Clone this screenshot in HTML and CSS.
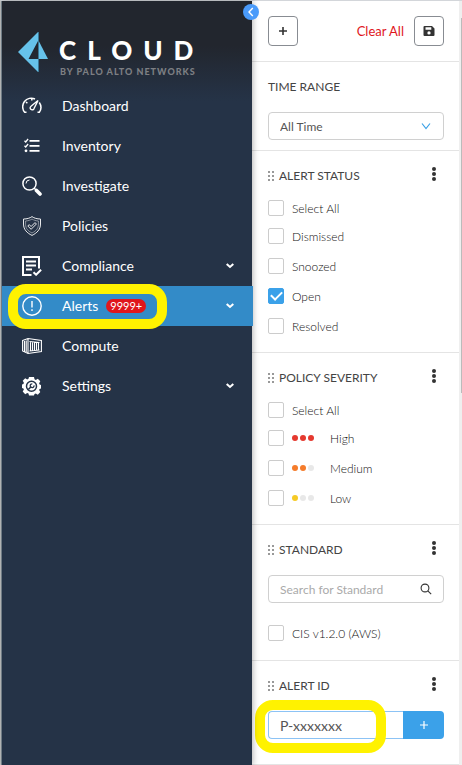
FILE: index.html
```html
<!DOCTYPE html>
<html lang="en">
<head>
<meta charset="utf-8">
<meta name="viewport" content="width=device-width, initial-scale=1">
<title>Cloud – Alerts</title>
<link rel="stylesheet" href="styles.css">
</head>
<body>
<div class="app">
  <aside class="sidebar">
    <button class="collapse" type="button" aria-label="Collapse menu">
      <svg width="16" height="16" viewBox="0 0 16 16" fill="none" stroke="#fff" stroke-width="1.400"><path d="M9.800 4 6 8l3.800 4"/></svg>
    </button>
    <header class="brand">
      <svg class="brand-mark" width="32" height="40" viewBox="0 0 32 40">
        <path fill="#66c2ea" d="M20 0 0 20l20 20V27H10.500L20 9z"/>
        <path fill="#66c2ea" d="M20.500 8.500 30 27h-9.500z"/>
        <path stroke="#3b7896" d="M20.500 0v40"/>
      </svg>
      <div class="brand-text">
        <span class="brand-name">CLOUD</span>
        <span class="brand-by">BY PALO ALTO NETWORKS</span>
      </div>
    </header>
    <nav class="nav">
      <a class="nav-item" href="#dashboard">
        <svg class="icon" viewBox="0 0 20 20" fill="none" stroke="#fff" stroke-width="1.500"><path d="M4.500 16.300H2.700A8.600 8.600 0 0 1 13 3M17.300 6.500a8.600 8.600 0 0 1 0 9.800h-1.800M9.800 2.500v2M4 6l1.400 1.200"/><path d="M16 4.500 9 10.200a2 2 0 1 0 2.900 2.600z" stroke-width="1.400"/></svg>
        <span>Dashboard</span>
      </a>
      <a class="nav-item" href="#inventory">
        <svg class="icon" viewBox="0 0 20 20" fill="none" stroke="#fff"><path stroke-width="1.800" d="M7.500 4.800h10M7.500 9.800h10M7.500 14.800h10"/><path stroke-width="1.300" d="m2.500 4.800 1.200 1.200 2.400-3M2.500 9.800 3.700 11l2.400-3"/><circle cx="4" cy="14.800" r="1.400" fill="#fff" stroke="none"/></svg>
        <span>Inventory</span>
      </a>
      <a class="nav-item" href="#investigate">
        <svg class="icon" viewBox="0 0 20 20" fill="none" stroke="#fff"><circle cx="7.500" cy="7.500" r="6.600" stroke-width="1.500"/><path d="M4 7.500A3.600 3.600 0 0 1 7.500 4" stroke-width="1"/><path d="m12 12 2 2" stroke-width="1.500"/><path d="m14.500 14.500 3.500 3.500" stroke-width="3.600" stroke-linecap="round"/></svg>
        <span>Investigate</span>
      </a>
      <a class="nav-item" href="#policies">
        <svg class="icon" viewBox="0 0 20 20" fill="none" stroke="#fff" stroke-width=".9"><path d="M10 .6c2.200 1.600 5 2.400 8.500 2.400v5c0 5.500-3.500 9-8.500 11.400C5 17 1.500 13.500 1.500 8V3C5 3 7.800 2.200 10 .6z"/><path d="M10 3c1.800 1.200 4 1.800 6.400 2v3.500c0 4-2.600 6.600-6.400 8.500-3.800-1.900-6.400-4.500-6.400-8.500V5C6 4.800 8.200 4.200 10 3z" stroke-opacity=".5"/><path d="m5.800 10 1.400-1.400 1.900 1.900L13 6.600 14.400 8l-5.300 5.300z"/></svg>
        <span>Policies</span>
      </a>
      <a class="nav-item" href="#compliance">
        <svg class="icon" viewBox="0 0 20 20" fill="none" stroke="#fff"><path stroke-width="2" d="M9.500 19H1V1h16v11.500"/><path stroke-width="1.800" d="M4 5.500h10M4 9.500h10M4 13.500h6"/><path stroke-width="2" d="m11.500 16.200 2.600 2.500 5-5"/></svg>
        <span>Compliance</span>
        <svg class="caret" viewBox="0 0 8 6" fill="none" stroke="#fff" stroke-width="2"><path d="m.7 1 3.300 3L7.300 1"/></svg>
      </a>
      <a class="nav-item nav-item-active" href="#alerts" aria-current="page">
        <svg class="icon" viewBox="0 0 20 20" fill="none" stroke="#fff"><circle cx="10" cy="10" r="9.200" stroke-width="1.400"/><path stroke-width="1.400" d="M10 5v6.500M10 13.200v1.800"/></svg>
        <span>Alerts</span>
        <span class="badge">9999+</span>
        <svg class="caret" viewBox="0 0 8 6" fill="none" stroke="#fff" stroke-width="2"><path d="m.7 1 3.300 3L7.300 1"/></svg>
        <i class="marker marker-alerts"></i>
      </a>
      <a class="nav-item" href="#compute">
        <svg class="icon" viewBox="0 0 20 20" fill="none" stroke="#fff"><path stroke-width="1.100" d="M.6 4.500 6 2.500l13.400 2v11L6 17.500.6 15zM6 2.500v15M2.500 5v10.500M4.200 4.500v11.500M8.500 6v8.500M10.500 6v8.500M12.500 6.200v8M14.500 6.400v7.800M16.500 6.600v7.400M7.500 5.500l10 1M7.500 15l10-1"/></svg>
        <span>Compute</span>
      </a>
      <a class="nav-item" href="#settings">
        <svg class="icon" viewBox="0 0 20 20"><path fill="#fff" d="M7 1h5l.5 2.300 1.300.6 2-1.200 2.500 2.600-1.200 2 .5 1.200 1.400.5v3.400l-1.400.5-.5 1.200 1.200 2-2.500 2.600-2-1.200-1.300.6L12 19.500H7l-.5-1.900-1.300-.6-2 1.200L.7 15.600l1.200-2-.5-1.200L0 11.900V8.500L1.400 8l.5-1.200-1.200-2 2.500-2.600 2 1.200 1.300-.6z"/><circle cx="9.500" cy="10.300" r="5" fill="none" stroke="#253347" stroke-width="1.500"/><path d="m6.300 13.500 3-3" stroke="#253347" stroke-width="1.600"/><path d="M12 9.300a1.900 1.900 0 1 1-1.700-1.500" fill="none" stroke="#253347" stroke-width="1.300"/></svg>
        <span>Settings</span>
        <svg class="caret" viewBox="0 0 8 6" fill="none" stroke="#fff" stroke-width="2"><path d="m.7 1 3.300 3L7.300 1"/></svg>
      </a>
    </nav>
  </aside>

  <main class="filters">
    <div class="toolbar">
      <button class="tool" type="button" aria-label="Add filter"><svg width="10" height="10" viewBox="0 0 10 10" stroke="#333" stroke-width="1.600"><path d="M5 1v8M1 5h8"/></svg></button>
      <button class="clear" type="button">Clear All</button>
      <button class="tool" type="button" aria-label="Save filter"><svg width="12" height="12" viewBox="0 0 12 12"><path fill="#333" fill-rule="evenodd" d="M1.500 1H9l2.500 2.500V10a1 1 0 0 1-1 1h-9a1 1 0 0 1-1-1V2a1 1 0 0 1 1-1zM2.500 2.300v2.500h5.800V2.300zM6 6.300a1.600 1.600 0 1 0 0 3.300 1.600 1.600 0 0 0 0-3.300z"/></svg></button>
    </div>

    <section class="group group-range">
      <label class="title" for="range">TIME RANGE</label>
      <div class="field">
        <select id="range"><option>All Time</option></select>
        <svg class="field-icon" width="10" height="8" viewBox="0 0 10 8" fill="none" stroke="#3aa0e6" stroke-width="1.200"><path d="m1 1.500 4 5 4-5"/></svg>
      </div>
    </section>

    <section class="group">
      <div class="title-row">
        <svg class="grip" width="6" height="10" viewBox="0 0 6 10"><path fill="#999" d="M0 0h2v2H0zM4 0h2v2H4zM0 4h2v2H0zM4 4h2v2H4zM0 8h2v2H0zM4 8h2v2H4z"/></svg>
        <h2 class="title">ALERT STATUS</h2>
        <button class="more" type="button" aria-label="Alert status options"><svg width="4" height="14" viewBox="0 0 4 14" fill="#333"><circle cx="2" cy="2" r="2"/><circle cx="2" cy="7" r="2"/><circle cx="2" cy="12" r="2"/></svg></button>
      </div>
      <div class="checks">
        <label class="check check-all"><input type="checkbox"><span>Select All</span></label>
        <label class="check"><input type="checkbox"><span>Dismissed</span></label>
        <label class="check"><input type="checkbox"><span>Snoozed</span></label>
        <label class="check"><input type="checkbox" checked><span>Open</span></label>
        <label class="check"><input type="checkbox"><span>Resolved</span></label>
      </div>
    </section>

    <section class="group">
      <div class="title-row">
        <svg class="grip" width="6" height="10" viewBox="0 0 6 10"><path fill="#999" d="M0 0h2v2H0zM4 0h2v2H4zM0 4h2v2H0zM4 4h2v2H4zM0 8h2v2H0zM4 8h2v2H4z"/></svg>
        <h2 class="title">POLICY SEVERITY</h2>
        <button class="more" type="button" aria-label="Policy severity options"><svg width="4" height="14" viewBox="0 0 4 14" fill="#333"><circle cx="2" cy="2" r="2"/><circle cx="2" cy="7" r="2"/><circle cx="2" cy="12" r="2"/></svg></button>
      </div>
      <div class="checks">
        <label class="check check-all"><input type="checkbox"><span>Select All</span></label>
        <label class="check"><input type="checkbox"><span class="dots dots-high"><i></i><i></i><i></i></span><span>High</span></label>
        <label class="check"><input type="checkbox"><span class="dots dots-medium"><i></i><i></i><i></i></span><span>Medium</span></label>
        <label class="check"><input type="checkbox"><span class="dots dots-low"><i></i><i></i><i></i></span><span>Low</span></label>
      </div>
    </section>

    <section class="group group-standard">
      <div class="title-row">
        <svg class="grip" width="6" height="10" viewBox="0 0 6 10"><path fill="#999" d="M0 0h2v2H0zM4 0h2v2H4zM0 4h2v2H0zM4 4h2v2H4zM0 8h2v2H0zM4 8h2v2H4z"/></svg>
        <h2 class="title">STANDARD</h2>
        <button class="more" type="button" aria-label="Standard options"><svg width="4" height="14" viewBox="0 0 4 14" fill="#333"><circle cx="2" cy="2" r="2"/><circle cx="2" cy="7" r="2"/><circle cx="2" cy="12" r="2"/></svg></button>
      </div>
      <div class="field">
        <input type="text" placeholder="Search for Standard" aria-label="Search for Standard">
        <svg class="field-icon" width="12" height="12" viewBox="0 0 12 12" fill="none" stroke="#333" stroke-width="1.100"><circle cx="5" cy="5" r="3.900"/><path d="m7.800 7.800 3.400 3.400"/></svg>
      </div>
      <label class="check check-single"><input type="checkbox"><span>CIS v1.2.0 (AWS)</span></label>
    </section>

    <section class="group group-id">
      <div class="title-row">
        <svg class="grip" width="6" height="10" viewBox="0 0 6 10"><path fill="#999" d="M0 0h2v2H0zM4 0h2v2H4zM0 4h2v2H0zM4 4h2v2H4zM0 8h2v2H0zM4 8h2v2H4z"/></svg>
        <h2 class="title">ALERT ID</h2>
        <button class="more" type="button" aria-label="Alert ID options"><svg width="4" height="14" viewBox="0 0 4 14" fill="#333"><circle cx="2" cy="2" r="2"/><circle cx="2" cy="7" r="2"/><circle cx="2" cy="12" r="2"/></svg></button>
      </div>
      <div class="id-row">
        <input class="id-input" type="text" value="P-xxxxxxx" aria-label="Alert ID">
        <button class="id-add" type="button" aria-label="Add alert ID"><svg width="8" height="8" viewBox="0 0 8 8" stroke="#fff" stroke-width="1.200"><path d="M4 0v8M0 4h8"/></svg></button>
        <i class="marker marker-id"></i>
      </div>
    </section>
  </main>
  <div class="scroll"><div class="scroll-thumb"></div></div>
</div>
</body>
</html>
```

FILE: styles.css
```css
* { box-sizing: border-box; }

body {
  margin: 0;
  font-family: Lato, "Liberation Sans", sans-serif;
  font-size: 12px;
  color: #333;
  background: #fff;
}

button { font: inherit; padding: 0; cursor: pointer; }
svg { display: block; flex: none; }

.app {
  display: flex;
  min-height: 100vh;
  border-top: 1px solid #d3d6da;
  border-left: 1px solid #c4c6c6;
}

/* Sidebar */
.sidebar {
  position: relative;
  z-index: 1;
  flex: 0 0 251px;
  border-left: 1px solid #6f7b84;
  background: linear-gradient(#22262e 0, #22262e 45px, #253347 100px);
  box-shadow: 1px 0 6px rgba(0, 0, 0, .3);
}

.collapse {
  position: absolute;
  top: 3px;
  right: -7px;
  width: 16px;
  height: 16px;
  border: 0;
  border-radius: 50%;
  background: #4a9bfa;
}

.brand {
  display: flex;
  gap: 9px;
  height: 85px;
  padding: 31px 16px 0;
}

.brand-text { display: flex; flex-direction: column; padding-top: 2px; }

.brand-name {
  font-size: 26px;
  line-height: 32px;
  font-weight: 900;
  letter-spacing: 11px;
  color: #fff;
}

.brand-by {
  margin-left: 1px;
  font-size: 9px;
  line-height: 11px;
  font-weight: 900;
  letter-spacing: 1px;
  white-space: nowrap;
  color: #7d7f83;
}

.nav-item {
  position: relative;
  display: flex;
  align-items: center;
  height: 40px;
  padding: 0 18px 0 20px;
  font-size: 14px;
  line-height: 16px;
  color: #fff;
  text-decoration: none;
}

.nav-item-active { margin-right: -1px; padding-right: 19px; background: #338bc8; }

.icon { width: 20px; height: 20px; margin-right: 20px; }
.caret { width: 8px; height: 6px; margin-left: auto; }

.badge {
  margin-left: 8px;
  padding: 0 4px;
  border-radius: 7px;
  font-size: 11px;
  line-height: 14px;
  background: #e0161c;
}

.marker {
  position: absolute;
  border: 10px solid #fff200;
  border-radius: 18px;
  pointer-events: none;
}

.marker-alerts { left: 6px; top: -2px; width: 159px; height: 45px; }
.marker-id { left: -13px; top: -11px; width: 131px; height: 53px; }

/* Filter panel */
.filters { flex: 1; min-width: 0; }

.toolbar {
  display: flex;
  align-items: center;
  height: 61px;
  padding: 0 15px 0 16px;
  border-bottom: 1px solid #e4e4e4;
}

.tool {
  display: grid;
  place-items: center;
  width: 30px;
  height: 30px;
  border: 1px solid #888c92;
  border-radius: 4px;
  background: #fff;
}

.clear {
  margin-left: auto;
  margin-right: 10px;
  border: 0;
  font-size: 13px;
  color: #e0161c;
  background: none;
}

.group { padding: 16px 15px 18px 16px; border-bottom: 1px solid #e4e4e4; }
.group-range { padding-bottom: 10px; }
.group-standard { padding-bottom: 19px; }
.group-id { padding-bottom: 25px; }

.title {
  display: block;
  margin: 0;
  font-size: 12px;
  line-height: 18px;
  font-weight: 400;
  color: #444;
}

.title-row { display: flex; align-items: center; gap: 5px; }

.more {
  display: grid;
  justify-items: center;
  width: 20px;
  height: 18px;
  margin-left: auto;
  border: 0;
  background: none;
}

.checks { display: grid; gap: 14px; margin-top: 15px; }

.check {
  display: flex;
  align-items: center;
  gap: 8px;
  height: 16px;
  font-size: 12px;
  font-weight: 300;
  color: #111;
}

.check-all { margin-bottom: -2px; }
.check-single { margin-top: 22px; }

.check input {
  appearance: none;
  flex: none;
  width: 16px;
  height: 16px;
  margin: 0;
  border: 1px solid #ccc;
  border-radius: 2px;
  background: #fff;
}

.check input:checked { display: grid; place-items: center; border-color: #3ba1e9; background: #3ba1e9; }

.check input:checked::before {
  content: "";
  width: 9px;
  height: 5px;
  margin-bottom: 3px;
  border: solid #fff;
  border-width: 0 0 2px 2px;
  transform: rotate(-45deg);
}

.dots { display: flex; gap: 2px; width: 30px; }
.dots i { width: 6px; height: 6px; border-radius: 50%; background: #e8e8e8; }
.dots-high i { background: #e5392f; }
.dots-medium i:nth-child(-n+2) { background: #f57c2b; }
.dots-low i:first-child { background: #f6ca25; }

.field {
  display: grid;
  grid-template-columns: 1fr 34px;
  align-items: center;
  height: 28px;
  margin-top: 16px;
  border: 1px solid #d0d0d0;
  border-radius: 4px;
}

.field select,
.field input {
  grid-area: 1 / 1 / 2 / 3;
  appearance: none;
  width: 100%;
  height: 26px;
  padding: 0 34px 0 11px;
  border: 0;
  font: inherit;
  color: #555;
  background: none;
}

.field input::placeholder { color: #aaa; }
.field-icon { grid-area: 1 / 2; justify-self: center; pointer-events: none; }

.id-row { position: relative; display: flex; margin-top: 16px; }

.id-input {
  flex: 1;
  min-width: 0;
  height: 28px;
  padding: 0 11px;
  border: 1px solid #8cc3f5;
  border-right: 0;
  border-radius: 4px 0 0 4px;
  font: inherit;
  font-size: 14px;
  color: #555;
}

.id-add {
  display: grid;
  place-items: center;
  width: 41px;
  border: 0;
  border-radius: 0 4px 4px 0;
  background: #3ba1e9;
}

.scroll { flex: 0 0 3px; padding-top: 17px; background: #efefef; }
.scroll-thumb { width: 1px; height: 375px; margin-left: auto; background: #bbb; }
```
